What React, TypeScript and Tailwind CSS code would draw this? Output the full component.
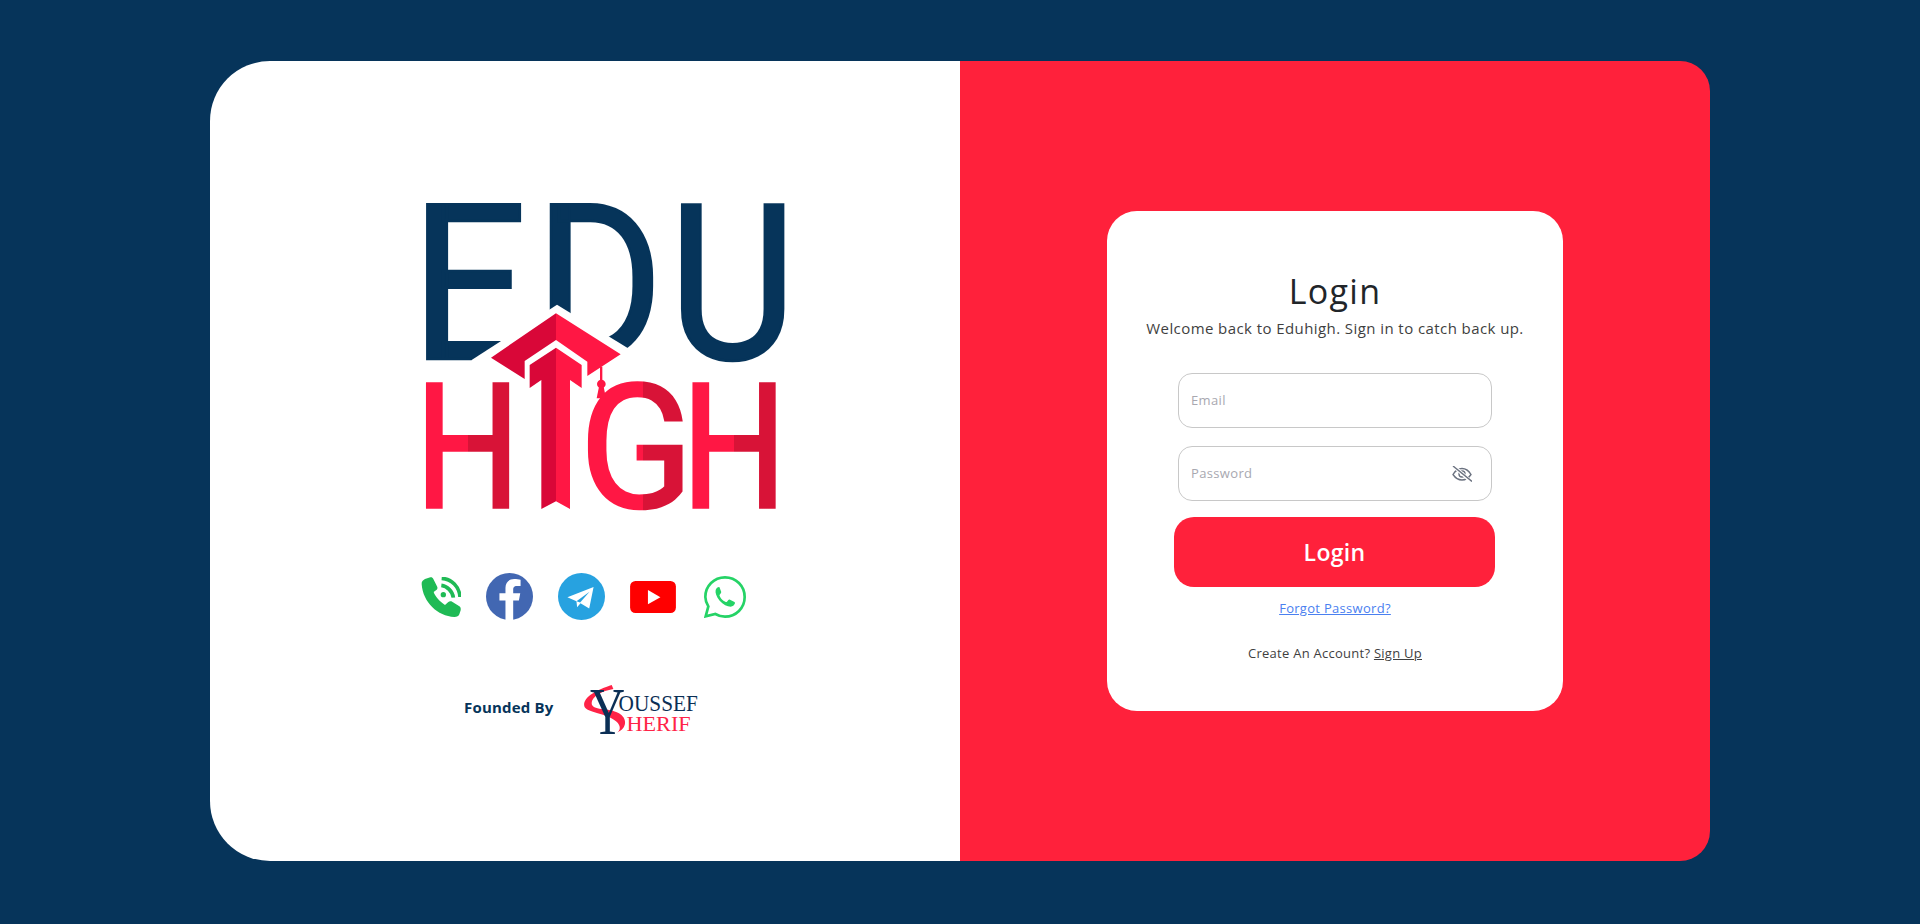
import React from "react";

const NAVY = "#06345a";
const LIGHT = "#ff1744";
const DARK = "#d81337";
const CAPDARK = "#d90738";

function Letter({ ch, x, y, size, sx = 1, fill, thicken }: { ch: string; x: number; y: number; size: number; sx?: number; fill: string; thicken: number }) {
  return (
    <text transform={`translate(${x} ${y}) scale(${sx} 1)`} fontFamily="Roboto, sans-serif" fontWeight={400} fontSize={size} fill={fill} stroke={fill} strokeWidth={thicken}>
      {ch}
    </text>
  );
}

function Split({ id, at, x, sx }: { id: string; at: number; x: number; sx: number }) {
  const local = (at - x) / sx;
  return (
    <linearGradient id={id} gradientUnits="userSpaceOnUse" x1={local - 1} x2={local + 1} y1={0} y2={0}>
      <stop offset="0.5" stopColor={LIGHT} />
      <stop offset="0.5" stopColor={DARK} />
    </linearGradient>
  );
}

function EduHighLogo() {
  return (
    <svg viewBox="0 0 1260 1050" width={420} height={350} className="block overflow-visible">
      <defs>
        <Split id="h1" at={203} x={46} sx={0.85} />
        <Split id="g1" at={729} x={538} sx={0.97} />
        <Split id="h2" at={1002} x={845} sx={0.85} />
      </defs>
      <Letter ch="E" x={31} y={536} size={654} sx={0.95} fill={NAVY} thicken={8} />
      <Letter ch="D" x={404} y={536} size={654} sx={0.9} fill={NAVY} thicken={8} />
      <Letter ch="U" x={806} y={536} size={654} sx={0.9} fill={NAVY} thicken={8} />
      <polygon points="215,540 471,374 770,557 770,570 215,570" fill="#fff" />
      <Letter ch="H" x={46} y={982} size={519} sx={0.85} fill="url(#h1)" thicken={10} />
      <Letter ch="G" x={538} y={982} size={519} sx={0.97} fill="url(#g1)" thicken={8} />
      <Letter ch="H" x={845} y={982} size={519} sx={0.85} fill="url(#h2)" thicken={10} />
      <polygon points="468,400 273,533 374,597 374,543 468,480" fill={CAPDARK} />
      <polygon points="468,400 662,523 562,588 562,545 468,480" fill={LIGHT} />
      <polygon points="468,503 389,555 389,624 424,600 424,987 468,964" fill={CAPDARK} />
      <polygon points="468,503 545,555 545,624 510,600 510,987 468,964" fill={LIGHT} />
      <rect x="600" y="560" width="7" height="45" fill={LIGHT} />
      <circle cx="604" cy="612" r="13" fill={LIGHT} />
      <polygon points="597,620 611,620 618,655 590,655" fill={LIGHT} />
    </svg>
  );
}

function PhoneIcon() {
  return (
    <svg viewBox="0 0 120 120" width={40} height={40} className="block">
      <path d="M2 22 C1 14 6 9 12 6 L28 1 C32 0 35 2 37 6 L49 30 C50 34 49 37 46 39 L38 45 C42 58 56 73 72 84 L82 75 C85 72 88 72 91 73 L114 87 C119 90 120 94 119 100 L115 112 C113 118 108 120 100 120 C50 118 6 76 2 22 Z" fill="#1fba55" />
      <path d="M62 4 C92 6 115 29 117 60" stroke="#1fba55" strokeWidth="11" fill="none" />
      <path d="M61 25 C78 27 95 43 97 62" stroke="#1fba55" strokeWidth="11" fill="none" />
      <circle cx="67" cy="53" r="8" fill="#1fba55" />
    </svg>
  );
}

function FacebookIcon() {
  return (
    <svg viewBox="0 0 140 140" width={47} height={47} className="block">
      <circle cx="70" cy="70" r="70" fill="#4267b2" />
      <path d="M58 140 V82 H40 V60 H58 V44 C58 27 69 18 84 18 C91 18 98 19 103 20 V39 H92 C83 39 81 44 81 50 V60 H102 L98 82 H81 V140 Z" fill="#fff" />
    </svg>
  );
}

function TelegramIcon() {
  return (
    <svg viewBox="0 0 140 140" width={47} height={47} className="block">
      <circle cx="70" cy="70" r="70" fill="#27a2e0" />
      <path d="M28 72 L106 42 L93 106 L67 90 L57 102 L55 84 Z" fill="#fff" />
      <path d="M55 84 L94 56 L66 88 Z" fill="#27a2e0" />
    </svg>
  );
}

function YoutubeIcon() {
  return (
    <svg viewBox="0 0 136 95" width={46} height={32} className="block">
      <rect x="0" y="0" width="136" height="95" rx="16" fill="#ff0000" />
      <polygon points="53,27 90,48 53,69" fill="#fff" />
    </svg>
  );
}

function WhatsappIcon() {
  return (
    <svg viewBox="0 0 126 126" width={42} height={42} className="block">
      <path d="M5 121 L13 91 C7 81 4 73 4 63 C4 30 30 4 63 4 C96 4 122 30 122 63 C122 96 96 122 63 122 C52 122 43 119 34 114 Z" fill="none" stroke="#25d366" strokeWidth="8" />
      <path d="M45 33 C41 33 37 37 35 42 C33 50 37 62 47 74 C57 85 70 92 80 92 C86 92 91 88 93 82 C93 79 92 78 90 77 L78 71 C76 70 74 71 73 72 L69 77 C67 78 66 78 64 77 C56 73 51 69 47 60 C46 58 47 57 48 55 L51 51 C52 49 52 48 51 46 L47 35 C46 33 46 33 45 33 Z" fill="#25d366" />
    </svg>
  );
}

function YoussefLogo() {
  return (
    <svg viewBox="0 0 348 152" width={116} height={50} className="block overflow-visible">
      <path d="M85 0 C60 8 1 30 1 60 C1 86 60 80 98 110 C116 125 110 140 100 145 C134 132 132 100 107 86 C75 68 24 80 24 55 C24 35 55 18 90 12 Z" fill="#ff2347" />
      <text transform="translate(19 150) scale(0.72 1)" fontFamily="'Liberation Serif', serif" fontSize="205" fill="#0b2f55">Y</text>
      <text x="106" y="80" fontFamily="'Liberation Serif', serif" fontSize="68" fill="#0b2f55" textLength="241" lengthAdjust="spacingAndGlyphs">OUSSEF</text>
      <text x="130" y="141" fontFamily="'Liberation Serif', serif" fontSize="62" fill="#ff2347" textLength="195" lengthAdjust="spacingAndGlyphs">HERIF</text>
    </svg>
  );
}

function EyeSlash() {
  return (
    <svg viewBox="0 0 20 16" width={20} height={16} className="block" fill="none" stroke="#6b7280" strokeWidth="1.4">
      <path d="M1 8.5 C4 3.5 7 2.5 10 2.5 C13 2.5 16 3.5 19 8.5 C16 13 13 14 10 14 C7 14 4 13 1 8.5 Z" />
      <circle cx="10" cy="8" r="3" />
      <path d="M2 0.5 L19 15.5" stroke="#fff" strokeWidth="3.5" />
      <path d="M1 0 L20 15.5" />
    </svg>
  );
}

export default function App() {
  return (
    <div className="min-h-[924px] bg-[#06345a] flex justify-center pt-[61px]">
      <div className="w-[1500px] h-[800px] flex" style={{ fontFamily: "'Open Sans', sans-serif" }}>
        <div className="w-[750px] bg-white rounded-l-[60px] pt-[119px] pl-[190px]">
          <EduHighLogo />
          <div className="mt-[43px] pl-[21px] flex items-center gap-[25px] h-[47px]">
            <PhoneIcon />
            <FacebookIcon />
            <TelegramIcon />
            <YoutubeIcon />
            <div className="ml-[3px]"><WhatsappIcon /></div>
          </div>
          <div className="mt-[65px] pl-[64px] flex items-center gap-[29px]">
            <span className="mb-[6px] text-[15px] font-bold tracking-[0.2px] text-[#06345a]">Founded By</span>
            <YoussefLogo />
          </div>
        </div>
        <div className="w-[750px] bg-[#ff213b] rounded-r-[30px] flex items-center justify-center">
          <div className="w-[456px] h-[500px] bg-white rounded-[30px] flex flex-col items-center pt-[58px]">
            <h1 className="text-[34px] leading-[44px] font-medium text-[#212529] tracking-[1.3px]">Login</h1>
            <p className="mt-[3px] text-[15px] leading-[24px] text-[#3f3f3f] tracking-[0.42px]">Welcome back to Eduhigh. Sign in to catch back up.</p>
            <input placeholder="Email" className="mt-[33px] w-[314px] h-[55px] rounded-[14px] border border-[#c8c8c8] px-3 pb-[2px] text-[13px] tracking-[0.35px] outline-none placeholder:text-[#a8a8b0]" />
            <div className="relative mt-[18px]">
              <input placeholder="Password" className="block w-[314px] h-[55px] rounded-[14px] border border-[#c8c8c8] px-3 pb-[2px] text-[13px] tracking-[0.35px] outline-none placeholder:text-[#a8a8b0]" />
              <span className="absolute right-[20px] top-[20px]"><EyeSlash /></span>
            </div>
            <button className="mt-[16px] mr-[1px] w-[321px] h-[70px] rounded-[20px] bg-[#ff213b] text-white text-[23px] font-semibold tracking-[0.3px]">Login</button>
            <a className="mt-[12px] text-[13px] text-[#4a80f0] underline tracking-[0.3px]">Forgot Password?</a>
            <p className="mt-[25px] text-[13px] text-[#3f3f3f] tracking-[0.26px]">Create An Account? <a className="underline">Sign Up</a></p>
          </div>
        </div>
      </div>
    </div>
  );
}
